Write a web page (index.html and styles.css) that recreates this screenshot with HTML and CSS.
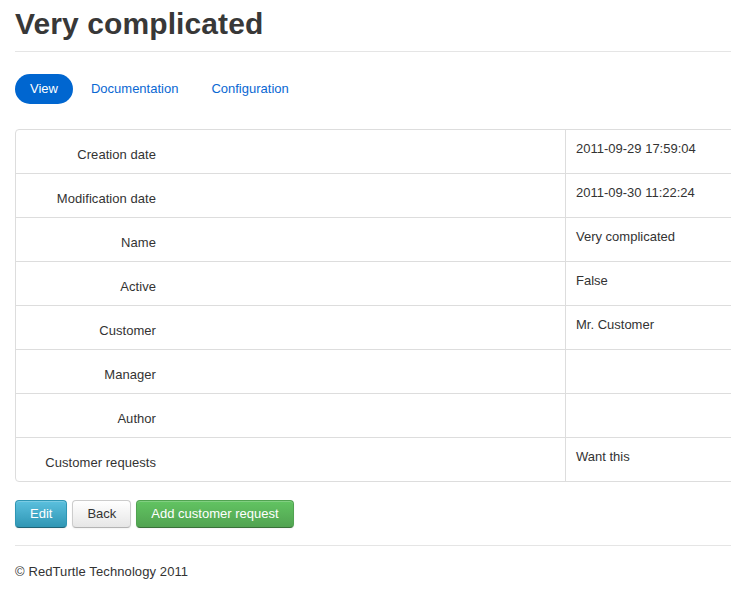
FILE: index.html
```html
<!DOCTYPE html>
<html>
<head>
<meta charset="utf-8">
<title>Very complicated</title>
<link rel="stylesheet" href="styles.css">
</head>
<body>
<div class="container">
  <div class="page-header">
    <h1>Very complicated</h1>
  </div>
  <ul class="pills">
    <li><a class="pill active" href="#">View</a></li>
    <li><a class="pill" href="#">Documentation</a></li>
    <li><a class="pill" href="#">Configuration</a></li>
  </ul>
  <div class="details">
    <div class="row"><div class="label-cell"><span class="label">Creation date</span></div><div class="value">2011-09-29 17:59:04</div></div>
    <div class="row"><div class="label-cell"><span class="label">Modification date</span></div><div class="value">2011-09-30 11:22:24</div></div>
    <div class="row"><div class="label-cell"><span class="label">Name</span></div><div class="value">Very complicated</div></div>
    <div class="row"><div class="label-cell"><span class="label">Active</span></div><div class="value">False</div></div>
    <div class="row"><div class="label-cell"><span class="label">Customer</span></div><div class="value">Mr. Customer</div></div>
    <div class="row"><div class="label-cell"><span class="label">Manager</span></div><div class="value"></div></div>
    <div class="row"><div class="label-cell"><span class="label">Author</span></div><div class="value"></div></div>
    <div class="row"><div class="label-cell"><span class="label">Customer requests</span></div><div class="value">Want this</div></div>
  </div>
  <div class="actions">
    <a class="btn btn-info" href="#">Edit</a>
    <a class="btn" href="#">Back</a>
    <a class="btn btn-success" href="#">Add customer request</a>
  </div>
  <footer class="footer">© RedTurtle Technology 2011</footer>
</div>
</body>
</html>
```
FILE: styles.css
```css
html, body {
  margin: 0;
  padding: 0;
  overflow: hidden;
}
body {
  font-family: "Liberation Sans", Arial, sans-serif;
  font-size: 13px;
  line-height: 18px;
  color: #333;
  background: #fff;
}
.container {
  padding-left: 15px;
  width: 760px;
}
.page-header {
  padding-top: 6px;
  padding-bottom: 9px;
  border-bottom: 1px solid #e5e5e5;
}
.page-header h1 {
  margin: 0;
  font-size: 30px;
  line-height: 36px;
  font-weight: bold;
  letter-spacing: 0.1px;
  color: #383838;
}
.pills {
  list-style: none;
  margin: 22px 0 0 0;
  padding: 0;
  display: flex;
  gap: 3px;
}
.pill {
  display: block;
  padding: 8px 15px;
  line-height: 14px;
  border-radius: 15px;
  color: #0a68d3;
  text-decoration: none;
}
.pill.active {
  background: #0066d0;
  color: #fff;
}
.details {
  margin-top: 25px;
  border: 1px solid #ddd;
  border-radius: 4px;
}
.row {
  display: flex;
  height: 43px;
  border-top: 1px solid #ddd;
}
.row:first-child {
  border-top: 0;
}
.label-cell {
  width: 549px;
  padding-top: 16px;
  box-sizing: border-box;
}
.label {
  display: block;
  width: 140px;
  text-align: right;
  letter-spacing: 0.05px;
}
.value {
  flex: 1;
  border-left: 1px solid #ddd;
  padding: 10px 10px 0 10px;
}
.actions {
  margin-top: 18px;
  display: flex;
  gap: 5px;
}
.btn {
  display: inline-block;
  padding: 4px 14px;
  font-size: 13px;
  line-height: 18px;
  color: #333;
  text-decoration: none;
  border: 1px solid #ccc;
  border-bottom-color: #b3b3b3;
  border-radius: 4px;
  background: linear-gradient(#ffffff, #e6e6e6);
  box-shadow: inset 0 1px 0 rgba(255,255,255,.2), 0 1px 2px rgba(0,0,0,.05);
}
.btn-info {
  color: #fff;
  background: linear-gradient(#5bc0de, #2f96b4);
  border-color: #2f96b4 #2f96b4 #1f6377;
}
.btn-success {
  color: #fff;
  background: linear-gradient(#62c462, #51a351);
  border-color: #51a351 #51a351 #387038;
}
.footer {
  margin-top: 17px;
  border-top: 1px solid #e5e5e5;
  padding-top: 17px;
  letter-spacing: 0.1px;
}
```
